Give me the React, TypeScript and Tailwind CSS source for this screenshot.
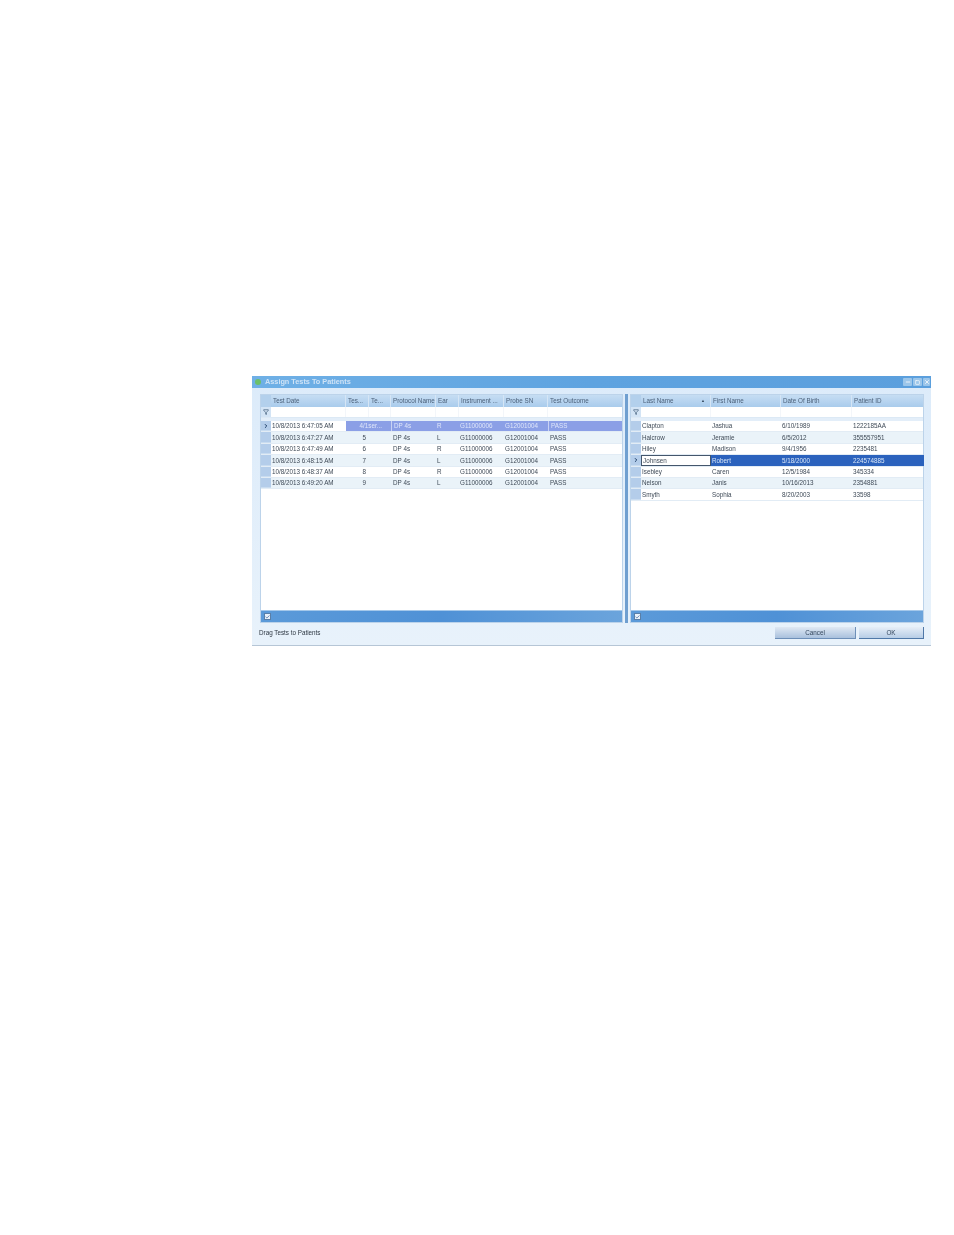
import React from 'react';
import { ChevronRight, Filter, Check, Minus, Square, X } from 'lucide-react';

const testCols = ['w-[75px]', 'w-[23px]', 'w-[22px]', 'w-[45px]', 'w-[23px]', 'w-[45px]', 'w-[44px]', 'w-[75px]'];
const testHead = ['Test Date', 'Tes...', 'Te...', 'Protocol Name', 'Ear', 'Instrument ...', 'Probe SN', 'Test Outcome'];
const testRows = [
    ['10/8/2013 6:47:05 AM', '4', 'DP 4s', 'R'],
    ['10/8/2013 6:47:27 AM', '5', 'DP 4s', 'L'],
    ['10/8/2013 6:47:49 AM', '6', 'DP 4s', 'R'],
    ['10/8/2013 6:48:15 AM', '7', 'DP 4s', 'L'],
    ['10/8/2013 6:48:37 AM', '8', 'DP 4s', 'R'],
    ['10/8/2013 6:49:20 AM', '9', 'DP 4s', 'L'],
];

const patientCols = ['w-[70px]', 'w-[70px]', 'w-[71px]', 'w-[72px]'];
const patientHead = ['Last Name', 'First Name', 'Date Of Birth', 'Patient ID'];
const patientRows = [
    ['Clapton', 'Jashua', '6/10/1989', '1222185AA'],
    ['Halcrow', 'Jeramie', '6/5/2012', '355557951'],
    ['Hiley', 'Madison', '9/4/1956', '2235481'],
    ['Johnsen', 'Robert', '5/18/2000', '224574885'],
    ['Isebley', 'Caren', '12/5/1984', '345334'],
    ['Nelson', 'Janis', '10/16/2013', '2354881'],
    ['Smyth', 'Sophia', '8/20/2003', '33598'],
];

const HeaderRow: React.FC<{ cols: string[]; labels: string[]; sortFirst?: boolean }> = ({ cols, labels, sortFirst }) => (
    <div className="flex h-[12px] bg-gradient-to-b from-[#c6ddf3] to-[#a9cbec] text-[#4a5f78]">
        <div className="w-[10px] shrink-0 bg-[#b3d0ec]" />
        {labels.map((label, i) => (
            <div key={label} className={`${cols[i]} shrink-0 flex items-center justify-between pl-[2px] pr-[5px] border-r border-[#d5e5f5] last:border-r-0`}>
                <span className="whitespace-nowrap">{label}</span>
                {sortFirst && i === 0 && <span className="text-[4px] text-[#34495f]">▲</span>}
            </div>
        ))}
    </div>
);

const FilterRow: React.FC<{ cols: string[] }> = ({ cols }) => (
    <div className="flex h-[11px] bg-white border-b border-[#dce9f5]">
        <div className="w-[10px] shrink-0 bg-[#d3e4f5] flex items-center justify-center">
            <Filter size={6} className="text-[#33506f]" strokeWidth={2.5} />
        </div>
        {cols.map((c, i) => (
            <div key={i} className={`${c} shrink-0 border-r border-[#f3f6fa] last:border-r-0`} />
        ))}
    </div>
);

const FooterBar: React.FC = () => (
    <div className="h-[12px] shrink-0 flex items-center pl-[3px] bg-gradient-to-r from-[#5b9ad9] via-[#4f91d6] to-[#6ba4dc] border-t border-[#a5c8ea]">
        <div className="w-[7px] h-[7px] bg-[#e8f1fa] border border-[#5a7fa8] flex items-center justify-center">
            <Check size={6} strokeWidth={3} className="text-[#27508a]" />
        </div>
    </div>
);

const RowHeaderCell: React.FC<{ current: boolean }> = ({ current }) => (
    <div className="w-[10px] h-full shrink-0 flex items-center justify-center bg-[#b4cdea] border-b border-[#c9dcf0]">
        {current && <ChevronRight size={6} strokeWidth={4} className="text-[#1d3d66]" />}
    </div>
);

const App: React.FC = () => {
    return (
        <div className="min-h-[1235px] bg-white pl-[252px] pt-[376px] font-['Liberation_Sans',Arial,sans-serif]">
            <div className="w-[679px] h-[270px] flex flex-col border-b border-[#b6c6d6] bg-gradient-to-b from-[#dcebfa] to-[#e8f2fb] text-[6.3px] text-[#3f4a57] blur-[0.45px]">
                {/* title bar */}
                <div className="h-[12px] shrink-0 flex items-center justify-between bg-gradient-to-r from-[#6fb0e6] via-[#5ea3e0] to-[#5b9fdd] pl-[3px] pr-[1px]">
                    <div className="flex items-center gap-[4px]">
                        <div className="w-[6px] h-[6px] rounded-full bg-[#6cc06a]" />
                        <span className="text-[7.3px] font-bold text-[#cfe3f6]">Assign Tests To Patients</span>
                    </div>
                    <div className="flex items-center gap-[1px]">
                        <div className="w-[9px] h-[8px] rounded-[1px] bg-[#9cc6ea] flex items-center justify-center"><Minus size={6} strokeWidth={3} className="text-white" /></div>
                        <div className="w-[9px] h-[8px] rounded-[1px] bg-[#9cc6ea] flex items-center justify-center"><Square size={5} strokeWidth={3} className="text-white" /></div>
                        <div className="w-[7px] h-[8px] rounded-[1px] bg-[#9cc6ea] flex items-center justify-center"><X size={6} strokeWidth={3} className="text-white" /></div>
                    </div>
                </div>

                {/* panels */}
                <div className="flex h-[235px] pl-[8px] pt-[6px]">
                    <div className="w-[363px] flex flex-col bg-white border border-[#bcd3ea]">
                        <HeaderRow cols={testCols} labels={testHead} />
                        <FilterRow cols={testCols} />
                        <div className="h-[3px] bg-[#e3eef9]" />
                        <div className="flex-1">
                            {testRows.map((r, i) => {
                                const selected = i === 0;
                                return (
                                    <div key={r[0]} className={`flex h-[11.4px] items-center border-b border-[#e2ecf5] ${i % 2 === 1 ? 'bg-[#eaf3f9]' : 'bg-white'}`}>
                                        <RowHeaderCell current={selected} />
                                        <div className="w-[75px] shrink-0 pl-[1px] whitespace-nowrap">{r[0]}</div>
                                        <div className={`flex h-full flex-1 items-center ${selected ? 'bg-[#8b9fe6] text-[#dfe6fa]' : ''}`}>
                                            <div className="w-[45px] shrink-0 text-right pr-[3px] whitespace-nowrap">
                                                {selected ? <span className="pr-[6px]">4/1ser...</span> : <span className="pr-[22px]">{r[1]}</span>}
                                            </div>
                                            <div className={`w-[45px] h-full flex items-center shrink-0 pl-[2px] ${selected ? 'border-l border-[#c8d2f4]' : ''}`}>{r[2]}</div>
                                            <div className="w-[23px] shrink-0 pl-[1px]">{r[3]}</div>
                                            <div className="w-[45px] shrink-0 pl-[1px]">G11000006</div>
                                            <div className="w-[44px] shrink-0 pl-[1px]">G12001004</div>
                                            <div className={`h-full flex items-center pl-[2px] ${selected ? 'border-l border-[#c8d2f4]' : ''}`}>PASS</div>
                                        </div>
                                    </div>
                                );
                            })}
                        </div>
                        <FooterBar />
                    </div>

                    {/* splitter */}
                    <div className="w-[7px] flex justify-center">
                        <div className="w-[3px] h-full bg-[#6f9fd0]" />
                    </div>

                    <div className="w-[294px] flex flex-col bg-white border border-[#bcd3ea]">
                        <HeaderRow cols={patientCols} labels={patientHead} sortFirst />
                        <FilterRow cols={patientCols} />
                        <div className="h-[3px] bg-[#e3eef9]" />
                        <div className="flex-1">
                            {patientRows.map((r, i) => {
                                const selected = i === 3;
                                return (
                                    <div key={r[0]} className={`flex h-[11.4px] items-center border-b border-[#e2ecf5] ${i % 2 === 1 ? 'bg-[#eaf3f9]' : 'bg-white'}`}>
                                        <RowHeaderCell current={selected} />
                                        <div className={`w-[70px] h-full shrink-0 pl-[1px] flex items-center ${selected ? 'bg-white border border-[#44566c]' : ''}`}>{r[0]}</div>
                                        <div className={`flex h-full flex-1 items-center ${selected ? 'bg-[#2b62bd] text-[#d9e6f7]' : ''}`}>
                                            <div className="w-[70px] shrink-0 pl-[1px]">{r[1]}</div>
                                            <div className="w-[71px] shrink-0 pl-[1px]">{r[2]}</div>
                                            <div className="w-[72px] shrink-0 pl-[1px]">{r[3]}</div>
                                        </div>
                                    </div>
                                );
                            })}
                        </div>
                        <FooterBar />
                    </div>
                </div>

                {/* status and buttons */}
                <div className="flex flex-1 items-start justify-between pl-[7px] pr-[7px] pt-[4px]">
                    <span className="text-[#2d3742] leading-[11px]">Drag Tests to Patients</span>
                    <div className="flex gap-[3px]">
                        <button className="w-[81px] h-[12px] bg-gradient-to-b from-[#dfe8f3] to-[#a9c1dd] border-b border-r border-[#6d8fb8] text-[#33465c]">Cancel</button>
                        <button className="w-[65px] h-[12px] bg-gradient-to-b from-[#e6eef7] to-[#b7cde6] border-b border-r border-[#4f78a8] text-[#33465c]">OK</button>
                    </div>
                </div>
            </div>
        </div>
    );
};

export default App;
